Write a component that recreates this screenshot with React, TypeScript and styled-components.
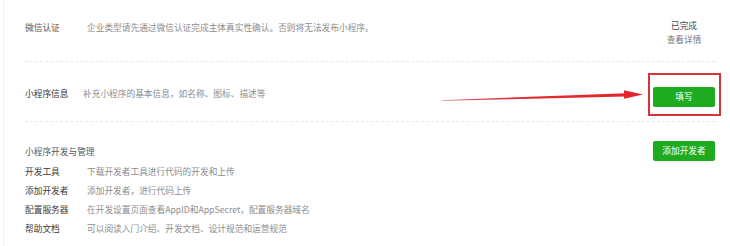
import React from "react";
import styled, { createGlobalStyle } from "styled-components";

const Global = createGlobalStyle`
  html, body { margin: 0; padding: 0; background: #ffffff; }
  body { font-family: "Noto Sans CJK SC", "Noto Sans", sans-serif; }
`;

const Page = styled.div`
  position: relative;
  width: 730px;
  height: 246px;
  overflow: hidden;
  background: #fff;
`;

const Panel = styled.div`
  margin-left: 3px;
  border-left: 1px solid #efefef;
  padding: 0 15px 0 21px;
  height: 246px;
  box-sizing: border-box;
`;

const InfoRow = styled.div<{ $h: number; $pt: number; $align: string }>`
  display: flex;
  align-items: ${(p) => p.$align};
  height: ${(p) => p.$h}px;
  padding-top: ${(p) => p.$pt}px;
  box-sizing: content-box;
  border-bottom: 1px dashed #e8e8e8;
`;

const Label = styled.div<{ $w: number; $c: string }>`
  flex: none;
  width: ${(p) => p.$w}px;
  font-size: 8.7px;
  line-height: 16px;
  color: ${(p) => p.$c};
  white-space: nowrap;
`;

const Desc = styled.div`
  flex: 1;
  font-size: 8.7px;
  line-height: 16px;
  color: #8c8c8c;
  white-space: nowrap;
`;

const Status = styled.div`
  display: flex;
  flex-direction: column;
  align-items: center;
  width: 62px;
  margin-top: -1px;
  font-size: 8.7px;
  line-height: 14px;
`;

const Done = styled.span`
  color: #444;
`;

const Detail = styled.span`
  color: #777;
`;

const GreenButton = styled.button`
  width: 62px;
  height: 20px;
  padding: 0;
  border: none;
  border-radius: 2px;
  background: #1fab1f;
  color: #fff;
  font-family: inherit;
  font-size: 8.7px;
  line-height: 20px;
  cursor: pointer;
`;

const Highlight = styled.div`
  position: relative;
`;

const RedFrame = styled.div`
  position: absolute;
  left: -5px;
  right: -6px;
  top: -8px;
  bottom: -9px;
  border: 2px solid #d3363a;
  pointer-events: none;
`;

const Arrow = styled.svg`
  position: absolute;
  left: 440px;
  top: 86px;
`;

const SectionHead = styled.div`
  display: flex;
  justify-content: space-between;
  align-items: center;
  height: 20px;
  margin-top: 19px;
`;

const SectionTitle = styled.div`
  font-size: 8.7px;
  color: #555;
`;

const List = styled.div`
  margin-top: 1px;
  display: flex;
  flex-direction: column;
`;

const ListRow = styled.div`
  display: flex;
  align-items: center;
  height: 19px;
`;

const tools = [
  ["开发工具", "下载开发者工具进行代码的开发和上传"],
  ["添加开发者", "添加开发者，进行代码上传"],
  ["配置服务器", "在开发设置页面查看AppID和AppSecret，配置服务器域名"],
  ["帮助文档", "可以阅读入门介绍、开发文档、设计规范和运营规范"],
];

export default function App() {
  return (
    <>
      <Global />
      <Page>
        <Panel>
          <InfoRow $h={41} $pt={20} $align="flex-start">
            <Label $w={62} $c="#555">微信认证</Label>
            <Desc>企业类型请先通过微信认证完成主体真实性确认。否则将无法发布小程序。</Desc>
            <Status>
              <Done>已完成</Done>
              <Detail>查看详情</Detail>
            </Status>
          </InfoRow>
          <InfoRow $h={55} $pt={4} $align="center">
            <Label $w={58} $c="#333">小程序信息</Label>
            <Desc>补充小程序的基本信息，如名称、图标、描述等</Desc>
            <Highlight>
              <GreenButton>填写</GreenButton>
              <RedFrame />
            </Highlight>
          </InfoRow>
          <SectionHead>
            <SectionTitle>小程序开发与管理</SectionTitle>
            <GreenButton>添加开发者</GreenButton>
          </SectionHead>
          <List>
            {tools.map(([l, d]) => (
              <ListRow key={l}>
                <Label $w={62} $c="#3a3a3a">{l}</Label>
                <Desc>{d}</Desc>
              </ListRow>
            ))}
          </List>
        </Panel>
        <Arrow width="210" height="18" viewBox="0 0 210 18">
          <defs>
            <linearGradient id="ag" x1="0" x2="1" y1="0" y2="0">
              <stop offset="0" stopColor="#d45a5e" />
              <stop offset="0.5" stopColor="#e02a2f" />
              <stop offset="1" stopColor="#e3262b" />
            </linearGradient>
          </defs>
          <polygon points="2,14.2 186,7.2 186,10.4 2,14.8" fill="url(#ag)" />
          <polygon points="184,4.2 203,8.4 184,12.8" fill="#e3262b" />
        </Arrow>
      </Page>
    </>
  );
}
